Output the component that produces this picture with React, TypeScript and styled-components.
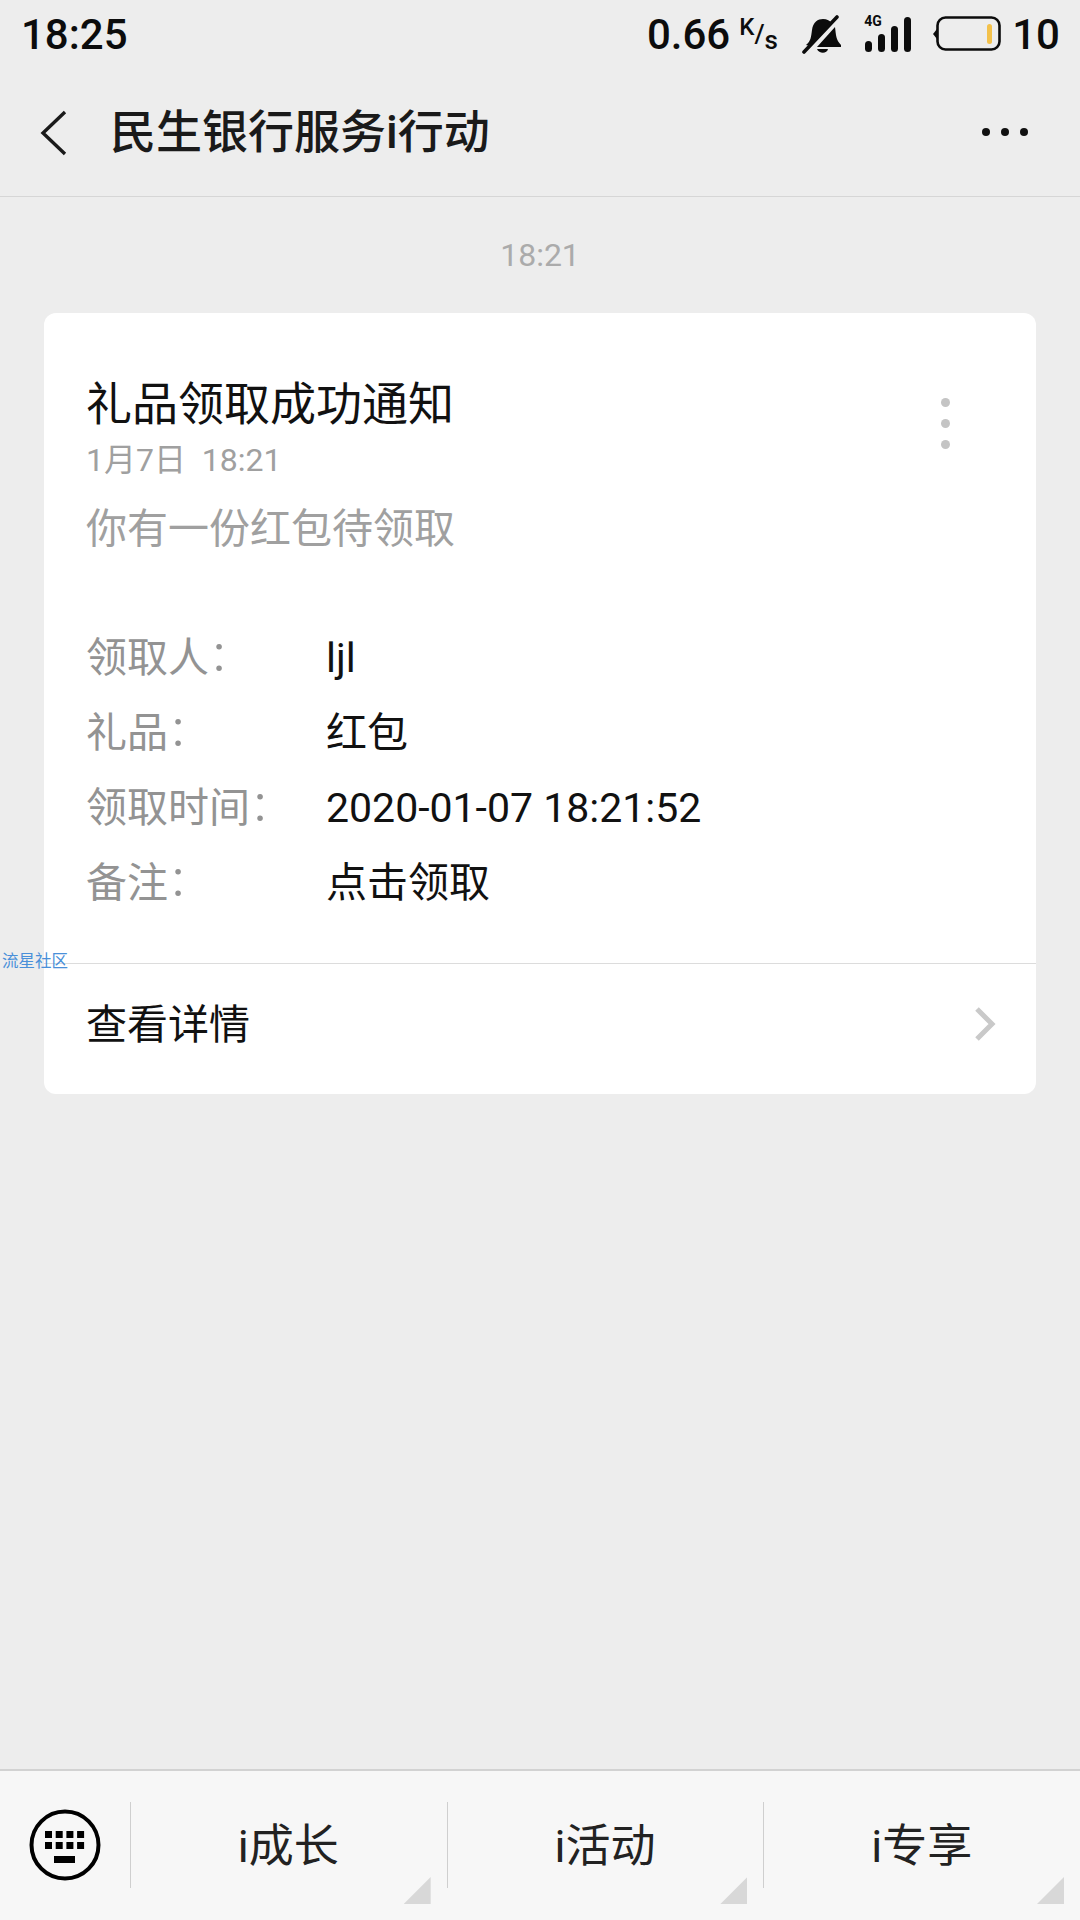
import * as React from 'react';
import styled, {createGlobalStyle} from 'styled-components';

const GlobalStyle = createGlobalStyle`
    html, body {
        margin: 0;
        padding: 0;
        background: #ededed;
    }
    * {
        box-sizing: border-box;
    }
`;

const fonts = `Roboto, "Noto Sans CJK SC", sans-serif`;

const rows = [
    {label: '领取人', value: 'ljl'},
    {label: '礼品', value: '红包'},
    {label: '领取时间', value: '2020-01-07 18:21:52'},
    {label: '备注', value: '点击领取'},
];

const tabs = ['i成长', 'i活动', 'i专享'];

const BellOffIcon = () => (
    <svg width="40" height="40" viewBox="0 0 40 40">
        <path
            d="M4 31 C9 27 9 23 10 16 C11 8 16 5 21 5 C25 5 28 7 30 9 L8 32 Z M33 13 C34 21 34 26 39 31 L39 33 L15 33 Z M15 35 H26 C25 40 17 40 15 35 Z"
            fill="#0c0c0c"
        />
        <path d="M2 38 L35 3" stroke="#0c0c0c" strokeWidth="3.6" strokeLinecap="round" />
    </svg>
);

const SignalIcon = () => (
    <svg width="47" height="36" viewBox="0 0 47 36">
        <rect x="1" y="24" width="7" height="11" rx="3.5" fill="#0c0c0c" />
        <rect x="14" y="17" width="7" height="18" rx="3.5" fill="#0c0c0c" />
        <rect x="27" y="9" width="7" height="26" rx="3.5" fill="#0c0c0c" />
        <rect x="40" y="0" width="7" height="35" rx="3.5" fill="#0c0c0c" />
    </svg>
);

const BatteryIcon = () => (
    <svg width="68" height="36" viewBox="0 0 68 36">
        <path d="M0 18 L4 13 V23 Z" fill="#0c0c0c" />
        <rect x="4.5" y="1.5" width="62" height="32" rx="8" fill="none" stroke="#0c0c0c" strokeWidth="2.6" />
        <rect x="54" y="8" width="5" height="20" rx="2.5" fill="#f3c14b" />
    </svg>
);

const BackIcon = () => (
    <svg width="30" height="46" viewBox="0 0 30 46">
        <path d="M25 2 L3 23 L25 44" fill="none" stroke="#1a1a1a" strokeWidth="3.4" />
    </svg>
);

const KeyboardIcon = () => (
    <svg width="72" height="72" viewBox="0 0 72 72">
        <circle cx="36" cy="36" r="33.5" fill="none" stroke="#000" strokeWidth="4" />
        {[0, 1, 2, 3].map((i) => (
            <React.Fragment key={i}>
                <rect x={16 + i * 10.7} y="22" width="7" height="7" fill="#000" />
                <rect x={16 + i * 10.7} y="33" width="7" height="7" fill="#000" />
            </React.Fragment>
        ))}
        <rect x="25" y="47" width="21" height="7" fill="#000" />
    </svg>
);

const ChevronIcon = () => (
    <svg width="24" height="36" viewBox="0 0 24 36">
        <path d="M4 3 L19 18 L4 33" fill="none" stroke="#c9c9c9" strokeWidth="5" />
    </svg>
);

const App = () => {
    return (
        <Page>
            <GlobalStyle />
            <StatusBar>
                <StatusTime>18:25</StatusTime>
                <StatusRight>
                    <Speed>0.66</Speed>
                    <SpeedUnit>
                        <sup>K</sup>/<sub>s</sub>
                    </SpeedUnit>
                    <BellWrap>
                        <BellOffIcon />
                    </BellWrap>
                    <SignalWrap>
                        <NetLabel>4G</NetLabel>
                        <SignalIcon />
                    </SignalWrap>
                    <BatteryWrap>
                        <BatteryIcon />
                    </BatteryWrap>
                    <Speed>10</Speed>
                </StatusRight>
            </StatusBar>
            <NavBar>
                <BackWrap>
                    <BackIcon />
                </BackWrap>
                <NavTitle>民生银行服务i行动</NavTitle>
                <MoreDots>
                    <Dot />
                    <Dot />
                    <Dot />
                </MoreDots>
            </NavBar>
            <Content>
                <TimeLabel>18:21</TimeLabel>
                <Card>
                    <CardBody>
                        <CardHead>
                            <div>
                                <CardTitle>礼品领取成功通知</CardTitle>
                                <CardDate>1月7日&nbsp;&nbsp;18:21</CardDate>
                            </div>
                            <CardMenu>
                                <MenuDot />
                                <MenuDot />
                                <MenuDot />
                            </CardMenu>
                        </CardHead>
                        <CardDesc>你有一份红包待领取</CardDesc>
                        <Rows>
                            {rows.map((it) => (
                                <Row key={it.label}>
                                    <RowLabel>
                                        {it.label}
                                        <Colon>:</Colon>
                                    </RowLabel>
                                    <RowValue>{it.value}</RowValue>
                                </Row>
                            ))}
                        </Rows>
                    </CardBody>
                    <DetailRow>
                        <DetailText>查看详情</DetailText>
                        <ChevronWrap>
                            <ChevronIcon />
                        </ChevronWrap>
                    </DetailRow>
                </Card>
                <Watermark>流星社区</Watermark>
            </Content>
            <TabBar>
                <KeyboardButton>
                    <KeyboardIcon />
                </KeyboardButton>
                {tabs.map((it) => (
                    <Tab key={it}>
                        <TabText>{it}</TabText>
                        <Corner />
                    </Tab>
                ))}
            </TabBar>
        </Page>
    );
};

const Page = styled.div`
    width: 1080px;
    height: 1920px;
    background: #ededed;
    display: flex;
    flex-direction: column;
    font-family: ${fonts};
    overflow: hidden;
`;

const StatusBar = styled.div`
    height: 70px;
    padding: 0 20px 2px 21px;
    display: flex;
    justify-content: space-between;
    align-items: center;
`;

const StatusTime = styled.span`
    font-size: 42px;
    font-weight: 500;
    color: #0c0c0c;
`;

const StatusRight = styled.div`
    display: flex;
    align-items: center;
`;

const Speed = styled.span`
    font-size: 42px;
    font-weight: 500;
    color: #0c0c0c;
`;

const SpeedUnit = styled.span`
    width: 36px;
    margin-left: 9px;
    font-size: 26px;
    font-weight: 500;
    color: #0c0c0c;
    line-height: 42px;
    white-space: nowrap;

    sup {
        font-size: 24px;
        vertical-align: 8px;
        line-height: 0;
    }

    sub {
        font-size: 26px;
        vertical-align: -6px;
        line-height: 0;
    }
`;

const BellWrap = styled.span`
    display: flex;
    margin-left: 27px;
`;

const SignalWrap = styled.span`
    display: flex;
    position: relative;
    margin-left: 22px;
    margin-top: 2px;
`;

const NetLabel = styled.span`
    position: absolute;
    left: 0;
    top: -4px;
    font-size: 14px;
    font-weight: 700;
    color: #0c0c0c;
    line-height: 16px;
`;

const BatteryWrap = styled.span`
    display: flex;
    margin-left: 22px;
    margin-right: 11px;
`;

const NavBar = styled.div`
    height: 127px;
    padding: 0 52px 0 40px;
    display: flex;
    align-items: center;
    border-bottom: 1px solid #d6d6d6;
`;

const BackWrap = styled.span`
    display: flex;
    width: 70px;
`;

const NavTitle = styled.h1`
    flex: 1;
    margin: 0 0 10px;
    font-size: 46px;
    font-weight: 500;
    color: #1a1a1a;
`;

const MoreDots = styled.div`
    display: flex;
    gap: 11px;
    margin-bottom: 2px;
`;

const Dot = styled.span`
    width: 8px;
    height: 8px;
    border-radius: 50%;
    background: #111;
`;

const Content = styled.div`
    flex: 1;
    position: relative;
    padding: 0 44px;
`;

const TimeLabel = styled.div`
    height: 116px;
    padding-top: 36px;
    text-align: center;
    font-size: 32px;
    line-height: 44px;
    color: #ababab;
`;

const Card = styled.div`
    height: 781px;
    background: #fff;
    border-radius: 12px;
    display: flex;
    flex-direction: column;
`;

const CardBody = styled.div`
    height: 651px;
    padding: 60px 86px 0 42px;
    border-bottom: 1px solid #dcdcdc;
`;

const CardHead = styled.div`
    display: flex;
    justify-content: space-between;
    align-items: flex-start;
`;

const CardTitle = styled.div`
    font-size: 46px;
    line-height: 62px;
    color: #111;
`;

const CardDate = styled.div`
    font-size: 32px;
    line-height: 50px;
    color: #a0a0a0;
`;

const CardMenu = styled.div`
    margin-top: 25px;
    display: flex;
    flex-direction: column;
    gap: 12px;
`;

const MenuDot = styled.span`
    width: 9px;
    height: 9px;
    border-radius: 50%;
    background: #c4c4c4;
`;

const CardDesc = styled.div`
    margin-top: 16px;
    font-size: 41px;
    line-height: 56px;
    color: #a0a0a0;
`;

const Rows = styled.div`
    margin-top: 77px;
    display: flex;
    flex-direction: column;
`;

const Row = styled.div`
    height: 75px;
    display: flex;
    align-items: baseline;
`;

const RowLabel = styled.span`
    width: 240px;
    font-size: 41px;
    line-height: 48px;
    color: #939393;
`;

const Colon = styled.span`
    margin-left: 4px;
    font-size: 50px;
    line-height: 0;
    vertical-align: 1px;
`;

const RowValue = styled.span`
    font-size: 41px;
    line-height: 48px;
    color: #111;
`;

const DetailRow = styled.div`
    flex: 1;
    padding: 0 39px 17px 42px;
    display: flex;
    justify-content: space-between;
    align-items: center;
`;

const DetailText = styled.span`
    font-size: 41px;
    color: #111;
`;

const ChevronWrap = styled.span`
    display: flex;
    margin-top: 6px;
`;

const Watermark = styled.span`
    position: absolute;
    left: 2px;
    top: 754px;
    font-size: 16.5px;
    line-height: 22px;
    color: #4a90d9;
`;

const TabBar = styled.div`
    height: 151px;
    background: #f7f7f7;
    border-top: 2px solid #d2d2d2;
    display: flex;
`;

const KeyboardButton = styled.div`
    width: 130px;
    padding: 38px 0 0 29px;
`;

const Tab = styled.div`
    flex: 1;
    position: relative;
    display: flex;
    justify-content: center;
    padding-top: 46px;

    &::before {
        content: '';
        position: absolute;
        left: 0;
        top: 31px;
        width: 1px;
        height: 86px;
        background: #cfcfcf;
    }
`;

const TabText = styled.span`
    font-size: 45px;
    line-height: 60px;
    color: #222;
`;

const Corner = styled.span`
    position: absolute;
    right: 16px;
    bottom: 16px;
    width: 27px;
    height: 27px;
    background: #d8d8d8;
    clip-path: polygon(100% 0, 100% 100%, 0 100%);
`;

export default App;
